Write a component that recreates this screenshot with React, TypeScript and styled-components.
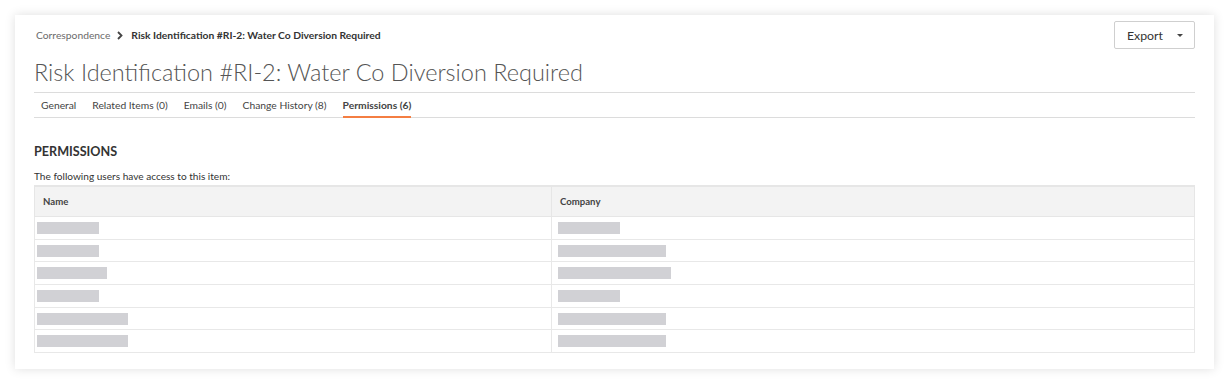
import styled, { createGlobalStyle } from "styled-components";

const GlobalStyle = createGlobalStyle`
  html, body {
    margin: 0;
    padding: 0;
    background: #ffffff;
    font-family: "Lato", "Liberation Sans", sans-serif;
  }
  * { box-sizing: border-box; }
`;

const Page = styled.div`
  padding: 15px;
  width: 1229px;
  height: 384px;
`;

const Card = styled.div`
  width: 1199px;
  height: 354px;
  background: #fff;
  box-shadow: 0 0 10px rgba(0, 0, 0, 0.13);
  padding: 6px 19px 16px 19px;
  display: flex;
  flex-direction: column;
`;

const Header = styled.div`
  display: flex;
  justify-content: space-between;
  align-items: flex-start;
  border-bottom: 1px solid #dcdcdc;
  height: 72px;
`;

const TitleBlock = styled.div`
  display: flex;
  flex-direction: column;
`;

const Breadcrumb = styled.div`
  display: flex;
  align-items: center;
  margin: 6px 0 0 2px;
  height: 16px;
  font-size: 10.3px;
  color: #6b6b6b;
`;

const Crumb = styled.span<{ $current?: boolean }>`
  font-weight: ${(p) => (p.$current ? 700 : 400)};
  color: ${(p) => (p.$current ? "#333" : "#6b6b6b")};
`;

const Chevron = styled.svg`
  margin: 0 8px 0 7px;
`;

const Title = styled.h1`
  margin: 14px 0 0 0;
  font-size: 23.5px;
  line-height: 30px;
  font-weight: 300;
  color: #555;
`;

const ExportButton = styled.button`
  width: 81px;
  height: 28px;
  border: 1px solid #cfcfcf;
  border-radius: 2px;
  background: #fff;
  display: flex;
  align-items: center;
  padding: 0 0 0 12px;
  font-family: inherit;
  font-size: 12.3px;
  color: #333;
`;

const Caret = styled.span`
  margin-left: 14px;
  width: 0;
  height: 0;
  border-left: 3px solid transparent;
  border-right: 3px solid transparent;
  border-top: 3px solid #444;
`;

const Tabs = styled.div`
  display: flex;
  gap: 16px;
  height: 25px;
  padding-left: 7px;
  border-bottom: 1px solid #dcdcdc;
`;

const Tab = styled.div<{ $active?: boolean }>`
  height: 25px;
  padding-top: 5px;
  font-size: 10.3px;
  line-height: 15px;
  color: #444;
  font-weight: ${(p) => (p.$active ? 700 : 400)};
  border-bottom: 2px solid ${(p) => (p.$active ? "#f47e42" : "transparent")};
  margin-bottom: -1px;
  white-space: nowrap;
`;

const SectionTitle = styled.h2`
  margin: 25px 0 0 0;
  font-size: 12.6px;
  line-height: 18px;
  font-weight: 700;
  color: #333;
`;

const Intro = styled.p`
  margin: 8px 0 2px 0;
  font-size: 10.1px;
  line-height: 14px;
  color: #333;
`;

const Table = styled.table`
  width: 100%;
  table-layout: fixed;
  border-collapse: collapse;
  border: 1px solid #e3e3e3;
  border-top: 2px solid #e6e6e6;
`;

const HeadCell = styled.th<{ $w?: number; $inset: number }>`
  background: #f3f3f3;
  height: 31px;
  text-align: left;
  padding: 0 0 0 ${(p) => p.$inset}px;
  font-size: 9.6px;
  font-weight: 700;
  color: #444;
  border: 1px solid #e6e6e6;
  width: ${(p) => (p.$w ? `${p.$w}px` : "auto")};
`;

const Row = styled.tr`
  height: 22.67px;
`;

const Cell = styled.td<{ $inset: number }>`
  padding: 0 0 0 ${(p) => p.$inset}px;
  border: 1px solid #e8e8e8;
  vertical-align: middle;
`;

const Placeholder = styled.div<{ $w: number }>`
  width: ${(p) => p.$w}px;
  height: 12px;
  background: #d1d1d5;
`;

const rows = [
  [62, 62],
  [62, 108],
  [70, 113],
  [62, 62],
  [91, 108],
  [91, 108],
];

const tabs = [
  "General",
  "Related Items (0)",
  "Emails (0)",
  "Change History (8)",
  "Permissions (6)",
];

export default function App() {
  return (
    <Page>
      <GlobalStyle />
      <Card>
        <Header>
          <TitleBlock>
            <Breadcrumb>
              <Crumb>Correspondence</Crumb>
              <Chevron width="6" height="9" viewBox="0 0 6 9">
                <path d="M1 1l3.5 3.5L1 8" fill="none" stroke="#444" strokeWidth="1.8" />
              </Chevron>
              <Crumb $current>Risk Identification #RI-2: Water Co Diversion Required</Crumb>
            </Breadcrumb>
            <Title>Risk Identification #RI-2: Water Co Diversion Required</Title>
          </TitleBlock>
          <ExportButton>
            Export
            <Caret />
          </ExportButton>
        </Header>
        <Tabs>
          {tabs.map((t) => (
            <Tab key={t} $active={t.startsWith("Permissions")}>
              {t}
            </Tab>
          ))}
        </Tabs>
        <SectionTitle>PERMISSIONS</SectionTitle>
        <Intro>The following users have access to this item:</Intro>
        <Table>
          <thead>
            <tr>
              <HeadCell $w={517} $inset={8}>Name</HeadCell>
              <HeadCell $inset={8}>Company</HeadCell>
            </tr>
          </thead>
          <tbody>
            {rows.map(([a, b], i) => (
              <Row key={i}>
                <Cell $inset={2}>
                  <Placeholder $w={a} />
                </Cell>
                <Cell $inset={6}>
                  <Placeholder $w={b} />
                </Cell>
              </Row>
            ))}
          </tbody>
        </Table>
      </Card>
    </Page>
  );
}
